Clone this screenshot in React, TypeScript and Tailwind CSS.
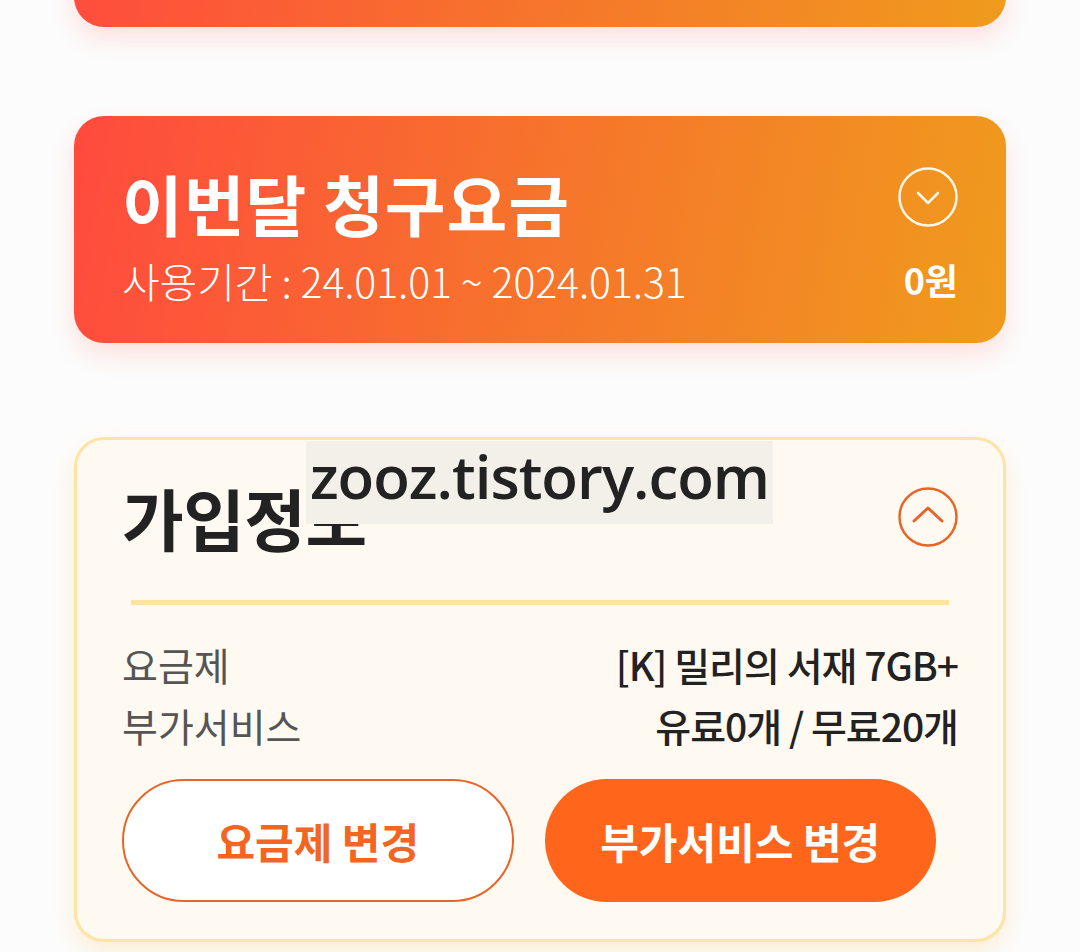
const kr = { fontFamily: '"Noto Sans CJK KR", "Noto Sans", sans-serif' };

function ChevronCircle({ up }: { up?: boolean }) {
  if (up) {
    return (
      <svg width="60" height="60" viewBox="0 0 60 60" fill="none">
        <circle cx="30" cy="30" r="28.5" stroke="#e8652a" strokeWidth="2.5" />
        <path d="M16 34 L30 21 L44 34" stroke="#e8652a" strokeWidth="3" strokeLinecap="round" strokeLinejoin="round" />
      </svg>
    );
  }
  return (
    <svg width="60" height="60" viewBox="0 0 60 60" fill="none">
      <circle cx="30" cy="30" r="28.5" stroke="#fff6e8" strokeWidth="2.5" />
      <path d="M20 26 L30 36 L40 26" stroke="#fff6e8" strokeWidth="2.5" strokeLinecap="round" strokeLinejoin="round" />
    </svg>
  );
}

const gradient = "bg-[linear-gradient(100deg,#ff4a3e_0%,#f7702d_45%,#ef9b1d_100%)]";

export default function App() {
  return (
    <div className="relative h-[952px] w-[1080px] overflow-hidden bg-[#fcfcfc]" style={kr}>
      <div className="mx-[74px] flex flex-col">
        <div className={`-mt-[200px] h-[227px] rounded-[30px] ${gradient} shadow-[0_12px_24px_rgba(255,90,70,0.16)]`} />

        {/* 이번달 청구요금 */}
        <div className={`mt-[89px] flex h-[227px] items-stretch justify-between rounded-[30px] px-[48px] ${gradient} shadow-[0_12px_24px_rgba(255,90,70,0.16)]`}>
          <div className="flex flex-col pt-[46px] text-white">
            <div className="text-[66px] leading-[80px] font-bold tracking-[1px]">이번달 청구요금</div>
            <div className="mt-[13px] text-[41px] leading-[50px] font-light tracking-[-0.1px]">
              사용기간 : 24.01.01 ~ 2024.01.31
            </div>
          </div>
          <div className="flex flex-col items-end pt-[51px]">
            <ChevronCircle />
            <div className="mt-[29px] text-[36px] leading-[46px] font-bold text-white">0원</div>
          </div>
        </div>

        {/* 가입정보 */}
        <div className="mt-[94px] flex h-[505px] flex-col rounded-[30px] border-[3px] border-[#fde4a6] bg-[#fffaf1] px-[45px] pt-[30px] shadow-[0_10px_22px_rgba(253,200,110,0.28)]">
          <div className="flex h-[94px] items-center justify-between">
            <div className="text-[67px] leading-[80px] font-bold tracking-[-0.5px] text-[#222]">가입정보</div>
            <ChevronCircle up />
          </div>
          <div className="mx-[9px] mt-[36px] h-[5px] bg-[#fde2a0]" />
          <div className="mt-[29px] flex flex-col text-[39px] leading-[61px]">
            <div className="flex justify-between">
              <span className="text-[#555]">요금제</span>
              <span className="font-medium tracking-[-1px] text-[#222]">[K] 밀리의 서재 7GB+</span>
            </div>
            <div className="flex justify-between">
              <span className="text-[#555]">부가서비스</span>
              <span className="font-medium tracking-[-1px] text-[#222]">유료0개 / 무료20개</span>
            </div>
          </div>
          <div className="mt-[23px] grid w-[814px] grid-cols-2 gap-[31px]">
            <button className="flex h-[123px] items-center justify-center rounded-full border-[2px] border-[#e8652a] bg-white text-[42px] font-bold text-[#f26522]">
              요금제 변경
            </button>
            <button className="flex h-[123px] items-center justify-center rounded-full bg-[#ff661c] text-[42px] font-bold text-white">
              부가서비스 변경
            </button>
          </div>
        </div>
      </div>

      <div
        className="absolute top-[441px] left-[306px] flex h-[83px] w-[467px] items-center justify-center bg-[#f3f0e9] pb-[14px] text-[60px] leading-none font-semibold tracking-[-1px] text-[#222]"
        style={{ fontFamily: '"Open Sans", sans-serif' }}
      >
        zooz.tistory.com
      </div>
    </div>
  );
}
